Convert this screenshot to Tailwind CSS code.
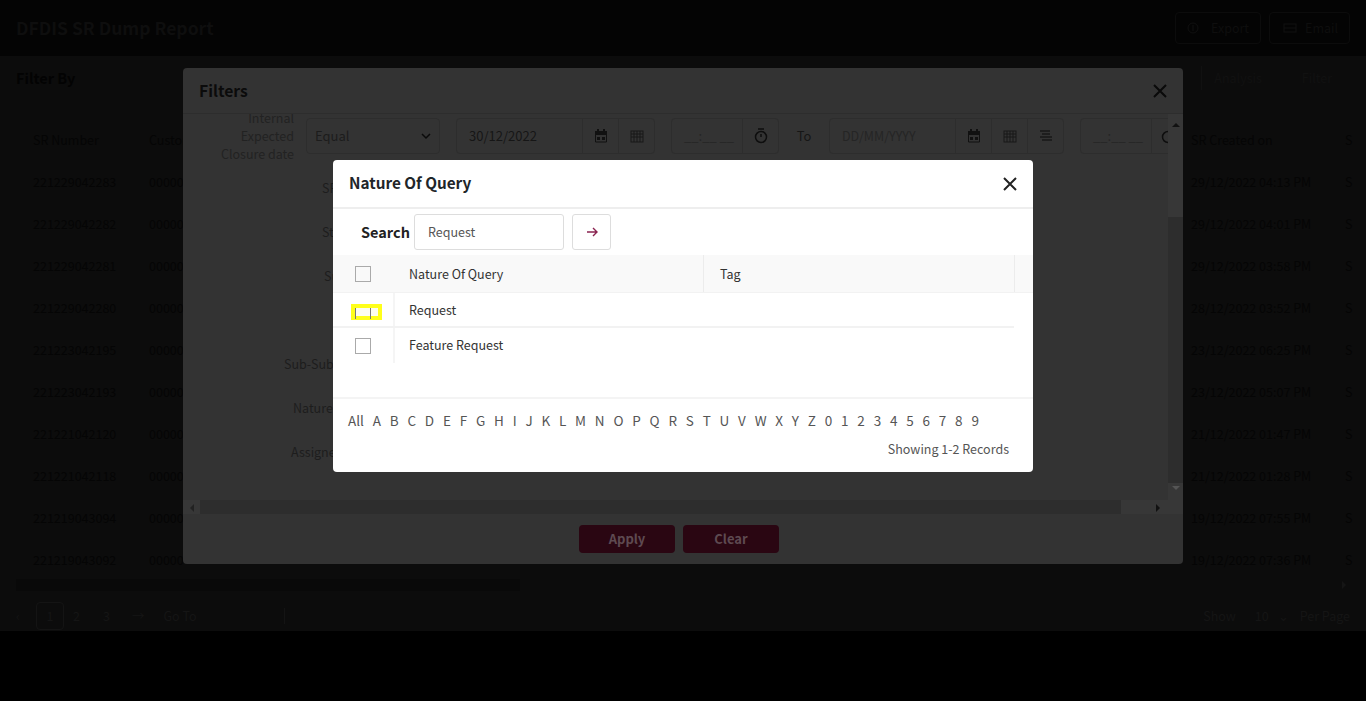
<!DOCTYPE html>
<html lang="en">
<head>
<meta charset="utf-8">
<title>DFDIS SR Dump Report</title>
<script src="https://cdn.jsdelivr.net/npm/@tailwindcss/browser@4"></script>
</head>
<body class="bg-black overflow-hidden font-['Noto_Sans_CJK_SC','Noto_Sans',sans-serif]">
<div class="relative w-[1366px] h-[701px] overflow-hidden bg-black">

  <!-- Base page -->
  <div class="h-[631px] bg-[#0c0c0c] flex flex-col text-[#050505] text-[12.5px] overflow-hidden">
    <header class="h-14 bg-[#040404] flex items-center justify-between pl-4 pr-[16px] shrink-0">
      <h1 class="text-[17.5px] font-semibold text-[#0e0e0e]">DFDIS SR Dump Report</h1>
      <div class="flex gap-2 text-[#0e0e0e]">
        <div class="w-[86px] h-8 border border-[#0c0c0c] rounded-sm flex items-center justify-center gap-3">
          <svg class="w-3 h-3" viewBox="0 0 12 12" fill="none" stroke="#101010"><circle cx="6" cy="6" r="5"/><path d="M6 3v6"/></svg><span>Export</span>
        </div>
        <div class="w-[81px] h-8 border border-[#0c0c0c] rounded-sm flex items-center justify-center gap-2 pl-0.5">
          <svg class="w-3.5 h-3" viewBox="0 0 14 12" fill="none" stroke="#101010"><rect x="1" y="2" width="12" height="8"/><path d="M1 6h12"/></svg><span>Email</span>
        </div>
      </div>
    </header>
    <div class="h-11 flex items-center justify-between pl-4 pr-[34px] shrink-0">
      <span class="text-[14.5px] font-semibold text-[#030303]">Filter By</span>
      <div class="flex items-center gap-10 text-[#111]"><span class="h-6 border-l border-[#111] -mr-7"></span><span>Analysis</span><span>Filter</span></div>
    </div>
    <div class="pl-[33px] pt-[19px] flex flex-col shrink-0">
      <div class="h-[42px] flex items-center"><span class="w-[116px]">SR Number</span><span class="w-[1042px]">Customer</span><span class="w-[154px]">SR Created on</span><span>S</span></div>
      <div class="h-[42px] flex items-center"><span class="w-[116px]">221229042283</span><span class="w-[1042px]">00000</span><span class="w-[154px]">29/12/2022 04:13 PM</span><span>S</span></div>
      <div class="h-[42px] flex items-center"><span class="w-[116px]">221229042282</span><span class="w-[1042px]">00000</span><span class="w-[154px]">29/12/2022 04:01 PM</span><span>S</span></div>
      <div class="h-[42px] flex items-center"><span class="w-[116px]">221229042281</span><span class="w-[1042px]">00000</span><span class="w-[154px]">29/12/2022 03:58 PM</span><span>S</span></div>
      <div class="h-[42px] flex items-center"><span class="w-[116px]">221229042280</span><span class="w-[1042px]">00000</span><span class="w-[154px]">28/12/2022 03:52 PM</span><span>S</span></div>
      <div class="h-[42px] flex items-center"><span class="w-[116px]">221223042195</span><span class="w-[1042px]">00000</span><span class="w-[154px]">23/12/2022 06:25 PM</span><span>S</span></div>
      <div class="h-[42px] flex items-center"><span class="w-[116px]">221223042193</span><span class="w-[1042px]">00000</span><span class="w-[154px]">23/12/2022 05:07 PM</span><span>S</span></div>
      <div class="h-[42px] flex items-center"><span class="w-[116px]">221221042120</span><span class="w-[1042px]">00000</span><span class="w-[154px]">21/12/2022 01:47 PM</span><span>S</span></div>
      <div class="h-[42px] flex items-center"><span class="w-[116px]">221221042118</span><span class="w-[1042px]">00000</span><span class="w-[154px]">21/12/2022 01:28 PM</span><span>S</span></div>
      <div class="h-[42px] flex items-center"><span class="w-[116px]">221219043094</span><span class="w-[1042px]">00000</span><span class="w-[154px]">19/12/2022 07:55 PM</span><span>S</span></div>
      <div class="h-[42px] flex items-center"><span class="w-[116px]">221219043092</span><span class="w-[1042px]">00000</span><span class="w-[154px]">19/12/2022 07:36 PM</span><span>S</span></div>
    </div>
    <div class="pl-4 pr-[20px] -mt-[2px] h-3 shrink-0 flex justify-between items-center"><div class="w-[504px] h-3 bg-[#090909]"></div><svg class="w-1 h-2" viewBox="0 0 4 8" fill="#151515"><path d="M0 0v8l4-4z"/></svg></div>
    <div class="h-7 mt-[11px] shrink-0 flex items-center justify-between pl-4 pr-4 text-[#151515]">
      <div class="flex items-center">
        <span class="w-5">‹</span>
        <span class="w-7 h-7 border border-[#141414] rounded-sm flex items-center justify-center">1</span>
        <span class="ml-[9px]">2</span><span class="ml-[23px]">3</span><span class="ml-[22px]">→</span><span class="ml-[19px]">Go To</span>
        <span class="ml-[87px] h-4 border-l border-[#141414]"></span>
      </div>
      <div class="flex items-center"><span>Show</span><span class="ml-[19px]">10</span><span class="ml-[9px]">⌄</span><span class="ml-[11px]">Per Page</span></div>
    </div>
  </div>

  <!-- Filters modal -->
  <div class="absolute left-[183px] top-[68px] w-[1000px] h-[496px] bg-[#333333] rounded flex flex-col overflow-hidden text-[12.5px] text-[#222]">
    <div class="h-[46px] border-b border-[#2d2d2d] shrink-0 flex items-center justify-between pl-4 pr-[15px]">
      <span class="text-[15.7px] font-semibold text-[#0b0b0b]">Filters</span>
      <svg class="w-4 h-4" viewBox="0 0 16 16" fill="none" stroke="#0a0a0a" stroke-width="2"><path d="M2 2l12 12M14 2L2 14"/></svg>
    </div>
    <div class="flex-1 flex min-h-0">
      <div class="flex-1 flex flex-col min-w-0 overflow-hidden">
        <div class="flex-1 overflow-hidden">
          <div class="flex items-start -mt-[5px] h-[45px] whitespace-nowrap text-[13px]">
            <div class="w-[111px] shrink-0 text-right text-[12.5px] leading-[18px]">Internal<br>Expected<br>Closure date</div>
            <div class="ml-3 shrink-0 mt-[9px] w-[134px] h-9 border border-[#2d2d2d] rounded flex items-center justify-between px-2 text-[#1c1c1c]">Equal
              <svg class="w-2.5 h-2" viewBox="0 0 10 8" fill="none" stroke="#0a0a0a" stroke-width="1.5"><path d="M1 2l4 4 4-4"/></svg>
            </div>
            <div class="ml-4 shrink-0 mt-[9px] w-[199px] h-9 border border-[#2d2d2d] rounded flex items-center text-[#161616]">
              <span class="w-[126px] pl-3">30/12/2022</span>
              <span class="w-9 h-full border-l border-[#2d2d2d] flex items-center justify-center"><svg class="w-3.5 h-3.5" viewBox="0 0 14 14" fill="#111"><path d="M1 2h12v4H1zM3 0h2v3H3zM9 0h2v3H9zM3 8h3v3H3zM8 8h3v3H8z"/><path d="M1.5 2v11h11V2" fill="none" stroke="#111"/></svg></span>
              <span class="w-9 h-full border-l border-[#2d2d2d] flex items-center justify-center"><svg class="w-3.5 h-3.5" viewBox="0 0 14 14" fill="none" stroke="#191919"><rect x="1" y="2" width="12" height="11"/><path d="M1 5h12M1 8h12M4 2v11M7 2v11M10 2v11"/></svg></span>
            </div>
            <div class="ml-4 shrink-0 mt-[9px] w-[108px] h-9 border border-[#2d2d2d] rounded flex items-center text-[#252525]">
              <span class="w-[71px] pl-3">__:__ __</span>
              <span class="w-9 h-full border-l border-[#2d2d2d] flex items-center justify-center"><svg class="w-3.5 h-4" viewBox="0 0 14 16" fill="none" stroke="#0e0e0e" stroke-width="1.5"><circle cx="7" cy="9" r="5.5"/><path d="M4 1h6M7 6v3"/></svg></span>
            </div>
            <div class="w-[50px] shrink-0 mt-[9px] h-9 flex items-center justify-center text-[#161616]">To</div>
            <div class="mt-[9px] shrink-0 w-[235px] h-9 border border-[#2d2d2d] rounded flex items-center text-[#252525]">
              <span class="w-[126px] pl-3 text-[12.5px]">DD/MM/YYYY</span>
              <span class="w-9 h-full border-l border-[#2d2d2d] flex items-center justify-center"><svg class="w-3.5 h-3.5" viewBox="0 0 14 14" fill="#111"><path d="M1 2h12v4H1zM3 0h2v3H3zM9 0h2v3H9zM3 8h3v3H3zM8 8h3v3H8z"/><path d="M1.5 2v11h11V2" fill="none" stroke="#111"/></svg></span>
              <span class="w-9 h-full border-l border-[#2d2d2d] flex items-center justify-center"><svg class="w-3.5 h-3.5" viewBox="0 0 14 14" fill="none" stroke="#191919"><rect x="1" y="2" width="12" height="11"/><path d="M1 5h12M1 8h12M4 2v11M7 2v11M10 2v11"/></svg></span>
              <span class="w-9 h-full border-l border-[#2d2d2d] flex items-center justify-center"><svg class="w-3.5 h-3.5" viewBox="0 0 14 14" fill="none" stroke="#191919" stroke-width="1.5"><path d="M1 2h10M3 5h8M1 8h12M3 11h10"/></svg></span>
            </div>
            <div class="ml-4 mt-[9px] w-[108px] h-9 border border-[#2d2d2d] rounded flex items-center text-[#252525] shrink-0">
              <span class="w-[71px] pl-3">__:__ __</span>
              <span class="w-9 h-full border-l border-[#2d2d2d] flex items-center pl-[9px]"><svg class="w-3.5 h-4" viewBox="0 0 14 16" fill="none" stroke="#0e0e0e" stroke-width="1.5"><circle cx="7" cy="9" r="5.5"/></svg></span>
            </div>
          </div>
          <div class="flex flex-col whitespace-nowrap mt-3 text-[#1d1d1d]">
            <div class="h-11 flex items-center pl-[139px]">SR Status</div>
            <div class="h-11 flex items-center pl-[139px]">Status</div>
            <div class="h-11 flex items-center pl-[141px]">Sub Category</div>
            <div class="h-11"></div>
            <div class="h-11 flex items-center pl-[101px]">Sub-Sub Category</div>
            <div class="h-11 flex items-center pl-[110px]">Nature Of Query</div>
            <div class="h-11 flex items-center pl-[108px]">Assigned To</div>
          </div>
        </div>
        <div class="h-[15px] mb-[-1px] flex items-center bg-[#373737] shrink-0">
          <span class="w-[17px] flex justify-center"><svg class="w-1 h-2" viewBox="0 0 4 8" fill="#222"><path d="M4 0v8L0 4z"/></svg></span>
          <span class="w-[921px] h-full bg-[#2d2d2d]"></span>
          <span class="flex-1 flex justify-end pr-2"><svg class="w-1 h-2" viewBox="0 0 4 8" fill="#111"><path d="M0 0v8l4-4z"/></svg></span>
        </div>
      </div>
      <div class="w-[15px] shrink-0 bg-[#373737] flex flex-col items-center">
        <svg class="w-2 h-1 mt-[9px] mb-[90px]" viewBox="0 0 8 4" fill="#111"><path d="M0 4h8L4 0z"/></svg>
        <span class="w-full h-[266px] bg-[#2d2d2d]"></span>
        <svg class="w-2 h-1 mt-[3px]" viewBox="0 0 8 4" fill="#555"><path d="M0 0h8L4 4z"/></svg>
      </div>
    </div>
    <div class="h-[50px] shrink-0 flex justify-center items-center gap-2 pr-2 text-[13px] font-semibold text-[#5e4a51]">
      <span class="w-24 h-7 rounded-sm bg-[#2a0612] flex items-center justify-center">Apply</span>
      <span class="w-24 h-7 rounded-sm bg-[#2a0612] flex items-center justify-center">Clear</span>
    </div>
  </div>

  <!-- Nature Of Query modal -->
  <div class="absolute left-[333px] top-[160px] w-[700px] h-[312px] bg-white rounded-sm flex flex-col text-[12.5px] text-[#333]">
    <div class="h-[49px] border-b-2 border-[#eeeeee] flex items-center justify-between pl-4 pr-4 shrink-0">
      <h2 class="text-[15.3px] font-semibold text-[#212529] pb-0.5">Nature Of Query</h2>
      <svg class="w-[14px] h-[14px]" viewBox="0 0 14 14" fill="none" stroke="#222" stroke-width="2"><path d="M1 1l12 12M13 1L1 13"/></svg>
    </div>
    <div class="h-[46px] flex items-center pl-7 shrink-0">
      <span class="text-[14.5px] font-semibold text-[#222] w-[53px]">Search</span>
      <div class="w-[150px] h-9 border border-[#dddddd] rounded-[3px] flex items-center pl-[13px] text-[#555]">Request</div>
      <div class="ml-2 w-[39px] h-9 border border-[#dddddd] rounded-[3px] flex items-center justify-center">
        <svg class="w-3 h-3" viewBox="0 0 12 12" fill="none" stroke="#8a2350" stroke-width="1.4"><path d="M1 6h10M7 2l4 4-4 4"/></svg>
      </div>
    </div>
    <div class="h-[38px] bg-[#f9f9f9] border-b border-[#f2f2f2] flex items-center shrink-0">
      <span class="w-[60px] pl-[22px] flex"><span class="w-4 h-4 border border-[#aaa]"></span></span>
      <span class="w-[310px] pl-4 pt-0.5">Nature Of Query</span>
      <span class="w-[312px] h-full border-l border-r border-[#ececec] flex items-center pl-4 pt-0.5">Tag</span>
    </div>
    <div class="w-[681px] h-[35px] border-b-2 border-[#f2f2f2] flex items-center shrink-0">
      <span class="relative w-[62px] h-full border-r-2 border-[#f5f5f5] shrink-0">
        <span class="absolute left-[18px] top-[11px] w-[31px] h-4 bg-[#ffff1a]"></span>
        <span class="absolute left-[22px] top-[15px] w-[23px] h-2 bg-[#fdfdf0]"></span>
        <span class="absolute left-[22px] top-[15px] w-4 h-[11px] border-x border-[#777]"></span>
      </span>
      <span class="pl-[14px] pt-0.5">Request</span>
    </div>
    <div class="h-[35px] flex items-center shrink-0">
      <span class="w-[62px] h-full border-r-2 border-[#f5f5f5] shrink-0 flex items-center pl-[22px]"><span class="w-4 h-4 border border-[#aaa]"></span></span>
      <span class="pl-[14px]">Feature Request</span>
    </div>
    <div class="mt-[34px] border-t-2 border-[#f4f4f4] flex-1 flex flex-col">
      <div class="pt-[11px] pl-[15px] flex gap-[8.8px] text-[13.5px] text-[#555] leading-5">
        <span>All</span><span>A</span><span>B</span><span>C</span><span>D</span><span>E</span><span>F</span><span>G</span><span>H</span><span>I</span><span>J</span><span>K</span><span>L</span><span>M</span><span>N</span><span>O</span><span>P</span><span>Q</span><span>R</span><span>S</span><span>T</span><span>U</span><span>V</span><span>W</span><span>X</span><span>Y</span><span>Z</span><span>0</span><span>1</span><span>2</span><span>3</span><span>4</span><span>5</span><span>6</span><span>7</span><span>8</span><span>9</span>
      </div>
      <div class="mt-[9px] pr-6 text-right text-[#555] leading-5">Showing 1-2 Records</div>
    </div>
  </div>
</div>
</body>
</html>
